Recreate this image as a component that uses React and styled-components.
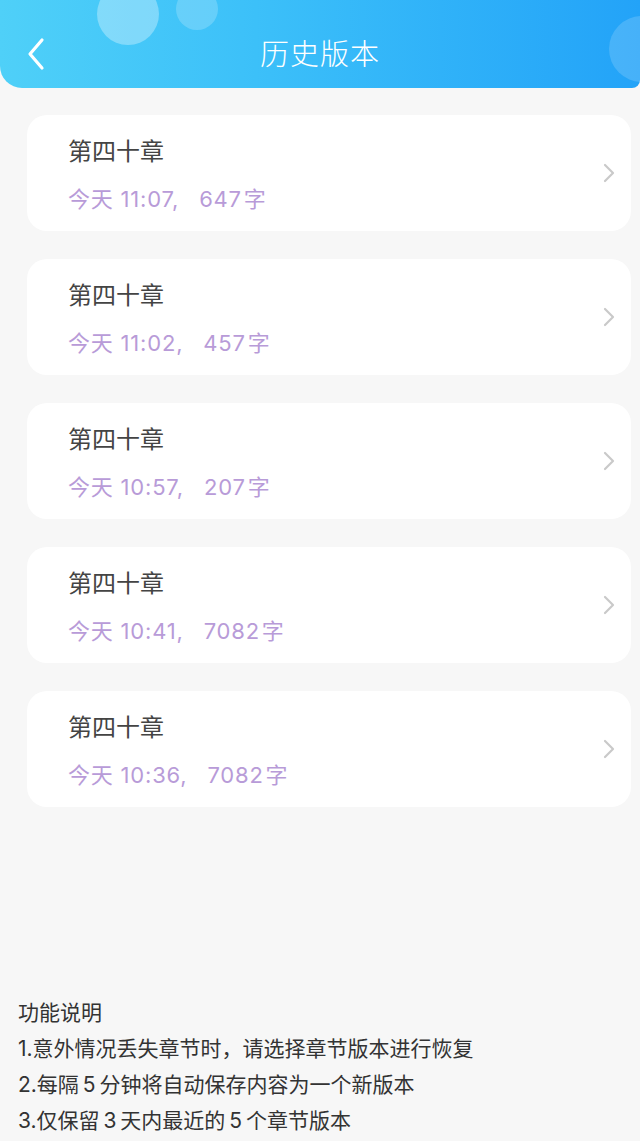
import React from "react";
import styled, { createGlobalStyle } from "styled-components";

const Global = createGlobalStyle`
  html, body { margin: 0; padding: 0; background: #f7f7f7; }
  body { font-family: Inter, "Noto Sans CJK SC", "Noto Sans", sans-serif; }
  * { box-sizing: border-box; }
`;

const Page = styled.div`
  width: 640px;
  min-height: 1141px;
  display: flex;
  flex-direction: column;
  background: #f7f7f7;
`;

const Header = styled.header`
  position: relative;
  height: 88px;
  overflow: hidden;
  border-radius: 0 0 8px 22px;
  background: linear-gradient(90deg, #4fd0f8 0%, #3cc0f9 40%, #23a3f8 100%);
  display: flex;
  align-items: center;
  justify-content: center;
`;

const Bubble = styled.span`
  position: absolute;
  border-radius: 50%;
  background: rgba(255, 255, 255, ${(p) => p.$a});
  left: ${(p) => p.$x - p.$r}px;
  top: ${(p) => p.$y - p.$r}px;
  width: ${(p) => p.$r * 2}px;
  height: ${(p) => p.$r * 2}px;
`;

const BackBtn = styled.button`
  position: absolute;
  left: 22px;
  top: 36px;
  width: 28px;
  height: 36px;
  padding: 0;
  border: 0;
  background: transparent;
  display: flex;
  align-items: center;
  justify-content: center;
`;

const Title = styled.h1`
  position: relative;
  margin: 0;
  padding-top: 16px;
  font-size: 29px;
  font-weight: 300;
  color: #fff;
  letter-spacing: 1px;
`;

const List = styled.div`
  display: flex;
  flex-direction: column;
  gap: 28px;
  padding: 27px 9px 0 27px;
`;

const Card = styled.div`
  height: 116px;
  background: #fff;
  border-radius: 20px;
  display: flex;
  align-items: center;
  padding: 0 15px 0 41px;
`;

const Info = styled.div`
  flex: 1;
  display: flex;
  flex-direction: column;
  gap: 18px;
  padding-top: 3px;
`;

const ChapterName = styled.div`
  font-size: 24px;
  line-height: 30px;
  color: #444;
`;

const Meta = styled.div`
  font-size: 22px;
  line-height: 28px;
  letter-spacing: 0.8px;
  color: #b89bd8;
  display: flex;
`;

const Words = styled.span`
  margin-left: 20px;
`;

const Unit = styled.span`
  margin-left: 2px;
`;

const Footer = styled.footer`
  margin-top: auto;
  padding: 0 18px 2px;
  font-size: 21px;
  line-height: 36px;
  word-spacing: -2px;
  color: #333;
`;

const Line = styled.div``;

const versions = [
  { time: "11:07", words: "647" },
  { time: "11:02", words: "457" },
  { time: "10:57", words: "207" },
  { time: "10:41", words: "7082" },
  { time: "10:36", words: "7082" },
];

const Chevron = () => (
  <svg width="14" height="22" viewBox="0 0 14 22">
    <path d="M3 3 L11 11 L3 19" fill="none" stroke="#c9c9c9" strokeWidth="2.2" strokeLinecap="round" strokeLinejoin="round" />
  </svg>
);

export default function App() {
  return (
    <Page>
      <Global />
      <Header>
        <Bubble $x={128} $y={14} $r={31} $a={0.32} />
        <Bubble $x={197} $y={9} $r={21} $a={0.2} />
        <Bubble $x={642} $y={49} $r={33} $a={0.16} />
        <BackBtn aria-label="返回">
          <svg width="20" height="34" viewBox="0 0 20 34">
            <path d="M16 3 L4 17 L16 31" fill="none" stroke="#fff" strokeWidth="3.2" strokeLinecap="round" strokeLinejoin="round" />
          </svg>
        </BackBtn>
        <Title>历史版本</Title>
      </Header>
      <List>
        {versions.map((v, i) => (
          <Card key={i}>
            <Info>
              <ChapterName>第四十章</ChapterName>
              <Meta>
                <span>今天 {v.time},</span>
                <Words>
                  {v.words}
                  <Unit>字</Unit>
                </Words>
              </Meta>
            </Info>
            <Chevron />
          </Card>
        ))}
      </List>
      <Footer>
        <Line>功能说明</Line>
        <Line>1.意外情况丢失章节时，请选择章节版本进行恢复</Line>
        <Line>2.每隔 5 分钟将自动保存内容为一个新版本</Line>
        <Line>3.仅保留 3 天内最近的 5 个章节版本</Line>
      </Footer>
    </Page>
  );
}
